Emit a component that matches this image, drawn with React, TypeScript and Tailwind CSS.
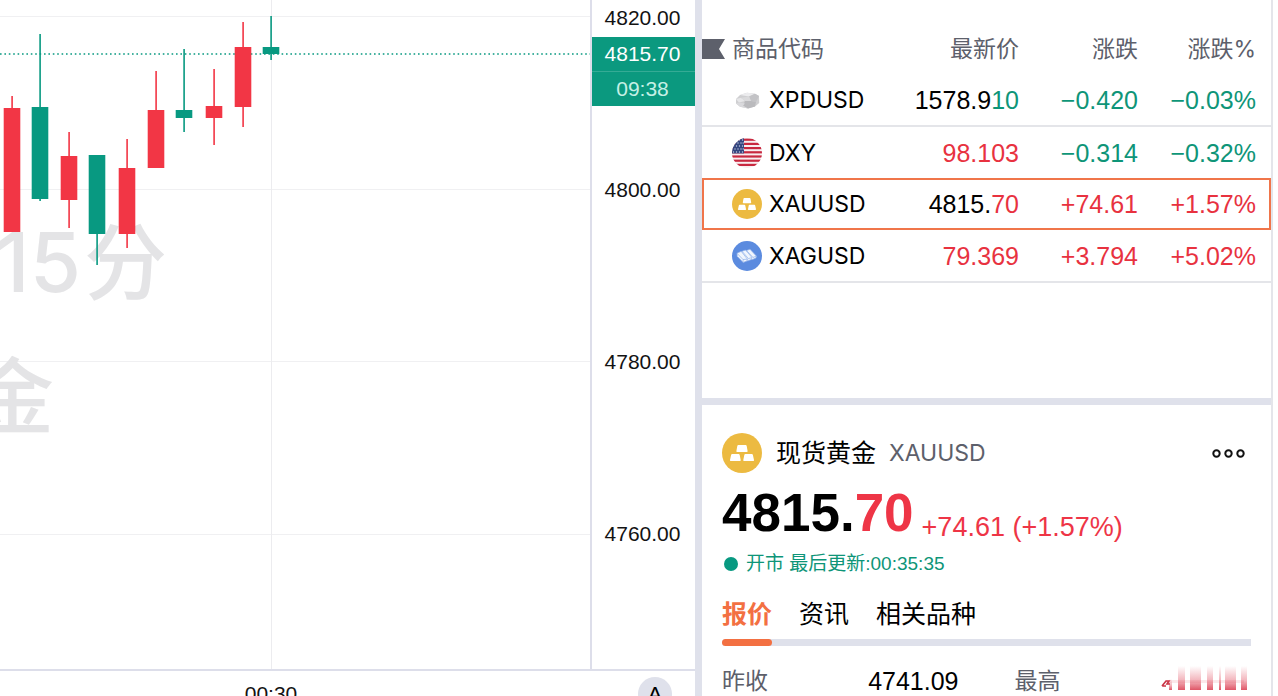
import clsx from "clsx";

type Candle = {
    x: number
    open: number
    close: number
    high: number
    low: number
    up: boolean
}

type Quote = {
    code: string
    icon: "palladium" | "usd" | "gold" | "silver"
    price: string
    tail: string
    change: string
    percent: string
    rising: boolean
    tailRising: boolean
}

const RED = "#f23645"
const GREEN = "#089981"

const numberFont = "font-['Liberation_Sans','Noto_Sans_CJK_SC',sans-serif]"
const nameFont = "font-['Inter','Noto_Sans_CJK_SC',sans-serif]"

const candles: Candle[] = [
    { x: 12, open: 108, close: 232, high: 96, low: 232, up: true },
    { x: 40, open: 107, close: 199, high: 34, low: 201, up: false },
    { x: 69, open: 156, close: 200, high: 132, low: 228, up: true },
    { x: 97, open: 155, close: 234, high: 155, low: 265, up: false },
    { x: 127, open: 168, close: 234, high: 139, low: 248, up: true },
    { x: 156, open: 110, close: 168, high: 71, low: 168, up: true },
    { x: 184, open: 110, close: 118, high: 49, low: 132, up: false },
    { x: 214, open: 106, close: 118, high: 69, low: 145, up: true },
    { x: 243, open: 47, close: 107, high: 22, low: 127, up: true },
    { x: 271, open: 47, close: 54, high: 16, low: 60, up: false },
]

const gridLines = [16, 189, 361, 534]

const priceLabels = ["4820.00", "4800.00", "4780.00", "4760.00"]

const quotes: Quote[] = [
    { code: "XPDUSD", icon: "palladium", price: "1578.9", tail: "10", change: "−0.420", percent: "−0.03%", rising: false, tailRising: false },
    { code: "DXY", icon: "usd", price: "", tail: "98.103", change: "−0.314", percent: "−0.32%", rising: false, tailRising: true },
    { code: "XAUUSD", icon: "gold", price: "4815.", tail: "70", change: "+74.61", percent: "+1.57%", rising: true, tailRising: true },
    { code: "XAGUSD", icon: "silver", price: "", tail: "79.369", change: "+3.794", percent: "+5.02%", rising: true, tailRising: true },
]

const tabs = ["报价", "资讯", "相关品种"]

function GoldIcon({ className }: { className?: string }) {
    return (
        <svg viewBox="0 0 40 40" className={className} aria-hidden="true">
            <circle cx="20" cy="20" r="20" fill="#ecba41" />
            <g fill="#fff">
                <path d="M16.4 12h7.2c.6 0 1 .3 1.1.9l.9 5.1c.1.6-.3 1-.9 1h-9.4c-.6 0-1-.4-.9-1l.9-5.1c.1-.6.5-.9 1.1-.9z" />
                <path d="M10.2 21h6.4c.6 0 1 .3 1.1.9l1 5c.1.6-.3 1.1-.9 1.1H8.9c-.6 0-1-.5-.9-1.1l1.1-5c.1-.6.5-.9 1.1-.9z" />
                <path d="M23.4 21h6.4c.6 0 1 .3 1.1.9l1.1 5c.1.6-.3 1.1-.9 1.1h-8.9c-.6 0-1-.5-.9-1.1l1-5c.1-.6.5-.9 1.1-.9z" />
            </g>
        </svg>
    )
}

function SilverIcon({ className }: { className?: string }) {
    return (
        <svg viewBox="0 0 30 30" className={className} aria-hidden="true">
            <circle cx="15" cy="15" r="15" fill="#5b8bdf" />
            <g fill="#f1f6fd" stroke="#8fb0ea" strokeWidth=".7" strokeLinejoin="round">
                <path d="M14.5 9.5l3.5-1.3 6.5 7-.6 1.8-4 1.8-6-7z" />
                <path d="M10 10.3l3.5-1.3 6.5 7.5-.6 2-4 1.6-6-7.3z" />
                <path d="M5 12.3l4.2-2 6.3 8-.5 1.6-3.8 1.6-6-6.2z" />
                <path d="M5 12.3l6 6.2 4.5-.3M10.2 10.4l6.2 7.2 3.4-1M14.6 9.6l6.4 6.8 3.3-1.2M11 18.5l.2 3" fill="none" />
            </g>
        </svg>
    )
}

function UsFlagIcon({ className }: { className?: string }) {
    return (
        <svg viewBox="0 0 30 30" className={className} aria-hidden="true">
            <defs>
                <clipPath id="flag-circle">
                    <circle cx="15" cy="15" r="15" />
                </clipPath>
            </defs>
            <g clipPath="url(#flag-circle)">
                <rect width="30" height="30" fill="#f8eef0" />
                {[0.6, 4.8, 9, 13.2, 17.4, 21.6, 25.8].map((y) => (
                    <rect key={y} y={y} width="30" height="2.2" fill="#c8283f" />
                ))}
                <rect width="12" height="15.4" fill="#34467f" />
                {[2, 5, 8, 11, 14].map((y, row) => (
                    <g key={y} fill="#c5cde3">
                        <circle cx={row % 2 ? 3 : 1.5} cy={y} r=".7" />
                        <circle cx={row % 2 ? 6 : 4.5} cy={y} r=".7" />
                        <circle cx={row % 2 ? 9 : 7.5} cy={y} r=".7" />
                        <circle cx={row % 2 ? 11.2 : 10.5} cy={y} r=".7" />
                    </g>
                ))}
            </g>
        </svg>
    )
}

function PalladiumIcon({ className }: { className?: string }) {
    return (
        <svg viewBox="0 0 30 30" className={className} aria-hidden="true">
            <path d="M4 14l4-4 7-2.3 8 1L27 11l.2 7-4.2 3.6-7 1.8-8-1.6-4-3.4z" fill="#cfcfd1" />
            <path d="M8 10l7-2.3 8 1-6 2.8z" fill="#ececee" />
            <path d="M4 14l5-1.2 4 3.2-6 1.6z" fill="#e6e6e8" />
            <path d="M17 11.5l6-2.8L27 11l-3 6-5-1z" fill="#c3c3c6" />
            <path d="M13 16l6 0 5 1-1 4.6-7 1.8-5-2.6z" fill="#bababd" />
            <path d="M9 12.8l8-1.3 2 4.5-6 0z" fill="#dadadc" />
            <path d="M4 18.4l3-.8 6 1-2 2.2 5 2.6-8-1.6z" fill="#d9d9dc" />
        </svg>
    )
}

function QuoteIcon({ icon }: { icon: Quote["icon"] }) {
    if (icon === "gold") return <GoldIcon className="size-[30px]" />
    if (icon === "silver") return <SilverIcon className="size-[30px]" />
    if (icon === "usd") return <UsFlagIcon className="size-[30px]" />
    return <PalladiumIcon className="size-[30px]" />
}

function Chart() {
    return (
        <svg className={clsx("block w-full h-full", nameFont)} role="img" aria-label="XAUUSD 15分">
            {gridLines.map((y) => (
                <line key={y} x1="0" x2="100%" y1={y + 0.5} y2={y + 0.5} stroke="#f0f0f2" />
            ))}
            <line x1="271.5" x2="271.5" y1="0" y2="100%" stroke="#ececef" />
            <g fill="#e4e4e6" fontSize="83" fontWeight="500" textAnchor="end">
                <text x="81" y="292">15</text>
                <text x="167" y="293">分</text>
                <text x="54" y="427">金</text>
            </g>
            <line x1="0" x2="100%" y1="54" y2="54" stroke={GREEN} strokeWidth="1.6" strokeDasharray="1.6 2.8" />
            {candles.map((c) => (
                <g key={c.x} fill={c.up ? RED : GREEN}>
                    <rect x={c.x - 0.7} y={c.high} width="1.6" height={c.low - c.high} />
                    <rect x={c.x - 8.3} y={c.open} width="16.6" height={c.close - c.open} />
                </g>
            ))}
        </svg>
    )
}

function PriceAxis() {
    return (
        <div className="relative w-[105px] shrink-0 border-l-2 border-[#dddeea] text-[21px] leading-[34px] text-center text-[#131313]">
            <ul className="flex flex-col gap-[138px] pt-px pr-[2px]">
                {priceLabels.map((label) => (
                    <li key={label}>{label}</li>
                ))}
            </ul>
            <div className="absolute inset-x-0 top-[37px] bg-[#0b997f] text-white">
                <div className="border-b border-[#35ab95] pr-[2px] font-medium">4815.70</div>
                <div className="pr-[2px] text-[#c5f0e5]">09:38</div>
            </div>
        </div>
    )
}

function Watchlist() {
    return (
        <table className="w-full table-fixed border-collapse text-[25px] leading-[30px]">
            <colgroup>
                <col />
                <col className="w-[130px]" />
                <col className="w-[119px]" />
                <col className="w-[133px]" />
            </colgroup>
            <thead>
                <tr className={clsx("h-[74px] text-[23px] text-[#5d606b]", nameFont)}>
                    <th scope="col" className="pt-6 font-normal">
                        <div className="flex items-center gap-[7px]">
                            <svg viewBox="0 0 23 20" className="w-[23px] h-5" aria-hidden="true">
                                <path d="M0 0h23l-6 10 6 10H0z" fill="#5d606b" />
                            </svg>
                            商品代码
                        </div>
                    </th>
                    <th scope="col" className="pt-6 font-normal text-right">最新价</th>
                    <th scope="col" className="pt-6 font-normal text-right">涨跌</th>
                    <th scope="col" className="pt-6 pr-[15px] font-normal text-right">涨跌%</th>
                </tr>
            </thead>
            <tbody>
                {quotes.map((q) => {
                    const color = q.rising ? "text-[#e8323f]" : "text-[#0e9578]"
                    return (
                        <tr
                            key={q.code}
                            className={clsx(
                                "h-[52px]",
                                q.icon === "gold" && "outline-2 -outline-offset-2 outline-[#f0754a]",
                                (q.icon === "palladium" || q.icon === "silver") && "border-b-2 border-[#e4e5e9]"
                            )}
                        >
                            <td>
                                <div className={clsx("flex items-center gap-[7px] pl-[30px] text-[23px] text-black", nameFont)}>
                                    <QuoteIcon icon={q.icon} />
                                    {q.code}
                                </div>
                            </td>
                            <td className="text-right text-black">
                                {q.price}
                                <span className={q.tailRising ? "text-[#e8323f]" : "text-[#0e9578]"}>{q.tail}</span>
                            </td>
                            <td className={clsx("text-right", color)}>{q.change}</td>
                            <td className={clsx("text-right pr-[15px]", color)}>{q.percent}</td>
                        </tr>
                    )
                })}
            </tbody>
        </table>
    )
}

// the daily high, smeared into vertical streaks
function HighValue() {
    return (
        <svg viewBox="0 0 90 28" className="w-[90px] h-7" role="img" aria-label="最高">
            <defs>
                <linearGradient id="streak" x1="0" x2="0" y1="0" y2="1">
                    <stop offset="0" stopColor="#e04356" stopOpacity="0" />
                    <stop offset=".6" stopColor="#e04356" stopOpacity=".4" />
                    <stop offset="1" stopColor="#d9384c" stopOpacity=".85" />
                </linearGradient>
            </defs>
            <path d="M1 20l4-5h3l-2 3h3M1 20h4" fill="none" stroke="#c93446" strokeWidth="1.6" />
            <rect x="5" y="14" width="78" height="3" fill="#e04356" opacity=".12" />
            <rect x="8" y="13" width="3" height="11" fill="url(#streak)" />
            <rect x="17" y="0" width="7" height="24" fill="url(#streak)" />
            <rect x="29" y="0" width="11" height="24" fill="url(#streak)" />
            <rect x="46" y="0" width="6" height="24" fill="url(#streak)" />
            <rect x="58" y="0" width="2" height="24" fill="url(#streak)" />
            <rect x="64" y="0" width="11" height="24" fill="url(#streak)" />
            <rect x="80" y="0" width="6" height="24" fill="url(#streak)" />
        </svg>
    )
}

function Detail() {
    return (
        <section className="px-5 pt-7">
            <header className="flex items-center">
                <GoldIcon className="size-10" />
                <h2 className="ml-[14px] text-[25px] leading-10 text-black">现货黄金</h2>
                <span className={clsx("ml-[13px] text-[23px] leading-10 text-[#5d606b]", nameFont)}>XAUUSD</span>
                <button type="button" aria-label="更多" className="ml-auto mr-[6px]">
                    <svg viewBox="0 0 33 10" className="w-[33px] h-[10px]" fill="none" stroke="#111" strokeWidth="2">
                        <circle cx="4.5" cy="5.5" r="3.2" />
                        <circle cx="16.5" cy="5.5" r="3.2" />
                        <circle cx="28.5" cy="5.5" r="3.2" />
                    </svg>
                </button>
            </header>
            <div className="mt-[10px] flex items-end gap-2 text-[#ee3546]">
                <strong className="text-[53px] leading-[60px] font-bold">
                    <span className="text-black">4815.</span>70
                </strong>
                <span className="text-[27px] leading-8">+74.61 (+1.57%)</span>
            </div>
            <p className="mt-[6px] flex items-center text-[19px] leading-[30px] text-[#0e9578]">
                <span className="ml-[2px] mr-2 size-[14px] rounded-full bg-[#089981]" />
                开市 最后更新:00:35:35
            </p>
            <div role="tablist" className="mt-[15px] flex gap-[27px] text-[25px] leading-10">
                {tabs.map((tab, i) => (
                    <button
                        key={tab}
                        type="button"
                        role="tab"
                        aria-selected={i === 0}
                        className={i === 0 ? "font-bold text-[#f37042]" : "text-black"}
                    >
                        {tab}
                    </button>
                ))}
            </div>
            <div className="mt-[5px] h-[7px] rounded-l-full bg-[#dfe1eb]">
                <div className="h-full w-[50px] rounded-full bg-[#f37042]" />
            </div>
            <dl className="mt-5 grid grid-cols-2 gap-x-14 text-[23px] leading-[30px] text-[#5d606b]">
                <div className="flex justify-between">
                    <dt>昨收</dt>
                    <dd className="text-[25px] text-black">4741.09</dd>
                </div>
                <div className="flex justify-between">
                    <dt>最高</dt>
                    <dd>
                        <HighValue />
                    </dd>
                </div>
            </dl>
        </section>
    )
}

export default function App() {
    return (
        <div className={clsx("grid grid-cols-[minmax(0,1fr)_583px] h-screen overflow-hidden bg-white", numberFont)}>
            <main className="flex flex-col min-w-0 min-h-0">
                <div className="flex flex-1 min-h-0">
                    <div className="flex-1 min-w-0">
                        <Chart />
                    </div>
                    <PriceAxis />
                </div>
                <div className="flex h-[27px] border-t-2 border-[#dddeea] text-[21px] text-[#131313]">
                    <div className="w-[542px] pt-[9px] leading-7 text-center">00:30</div>
                    <button type="button" className="ml-auto mr-[23px] mt-[6px] size-[34px] shrink-0 rounded-full bg-[#dfe1eb] leading-[30px] font-medium text-black">
                        A
                    </button>
                </div>
            </main>
            <aside className="flex min-h-0 border-l-[7px] border-[#dfe1eb]">
                <div className="flex-1 min-w-0 border-r-2 border-[#e4e5ea]">
                    <div className="h-[405px] border-b-[7px] border-[#dfe1eb]">
                        <Watchlist />
                    </div>
                    <Detail />
                </div>
                <div className="w-[5px]" />
            </aside>
        </div>
    )
}
